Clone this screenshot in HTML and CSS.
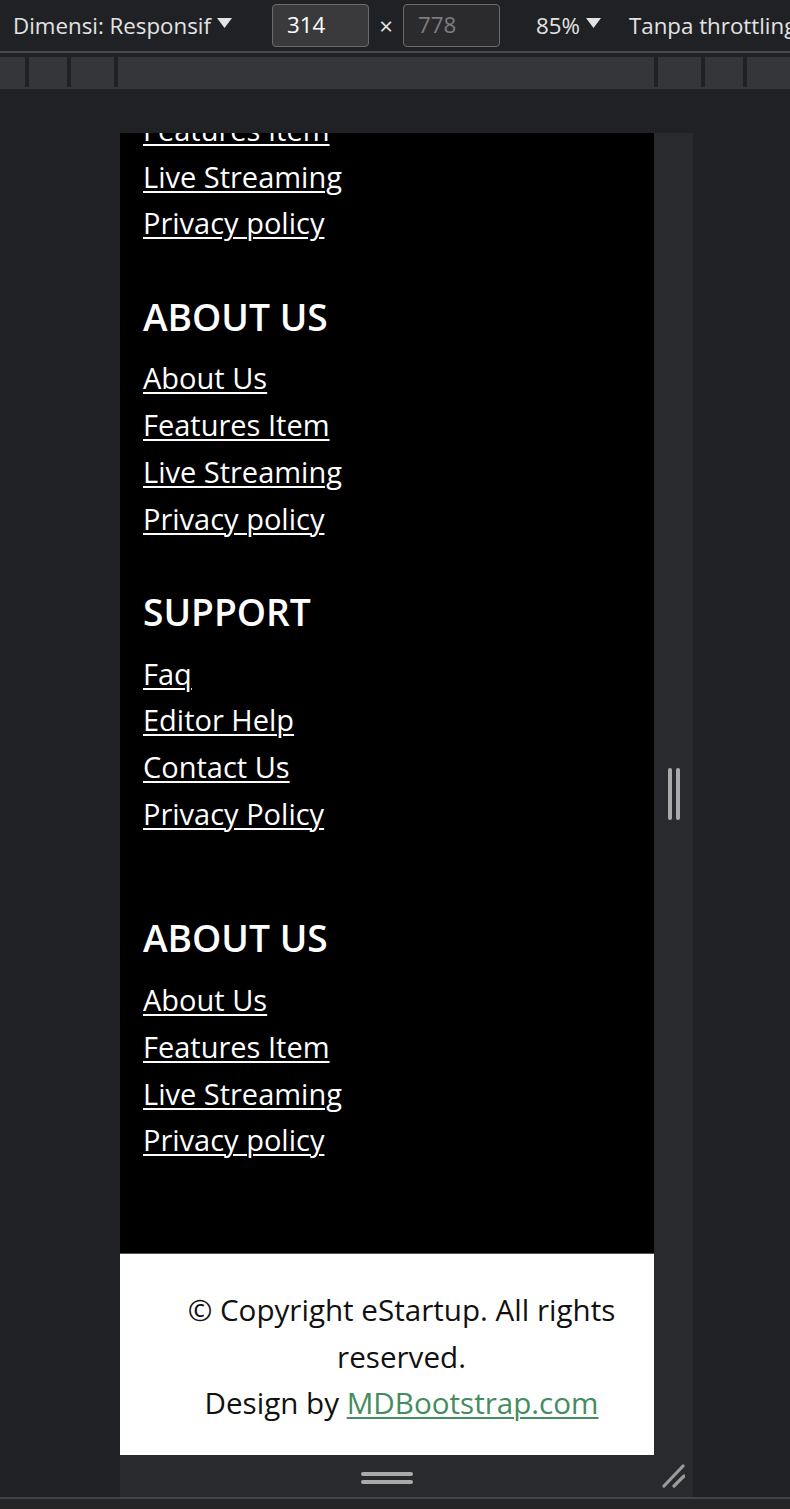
FILE: index.html
```html
<!DOCTYPE html>
<html lang="id">
<head>
<meta charset="utf-8">
<title>Footer responsive preview</title>
<link rel="stylesheet" href="styles.css">
</head>
<body>
<div class="devtools">
  <div class="toolbar">
    <div class="tb-item tb-dim">Dimensi: Responsif<svg class="tri" width="15" height="10" viewBox="0 0 15 10"><polygon points="0,0 15,0 7.5,10"/></svg></div>
    <div class="tb-input">314</div>
    <div class="tb-times">×</div>
    <div class="tb-input tb-muted">778</div>
    <div class="tb-item tb-zoom">85%<svg class="tri" width="15" height="10" viewBox="0 0 15 10"><polygon points="0,0 15,0 7.5,10"/></svg></div>
    <div class="tb-item tb-throttle">Tanpa throttling</div>
  </div>
  <div class="ruler">
    <div class="seg s1"></div><div class="sep"></div>
    <div class="seg s2"></div><div class="sep"></div>
    <div class="seg s3"></div><div class="sep"></div>
    <div class="seg s4"></div><div class="sep"></div>
    <div class="seg s3"></div><div class="sep"></div>
    <div class="seg s2"></div><div class="sep"></div>
    <div class="seg s5"></div>
  </div>
  <div class="stage">
    <div class="device">
      <div class="device-row">
        <div class="screen">
          <div class="dark">
            <ul class="links first">
              <li><a href="#">Features Item</a></li>
              <li><a href="#">Live Streaming</a></li>
              <li><a href="#">Privacy policy</a></li>
            </ul>
            <h5 class="col-title">ABOUT US</h5>
            <ul class="links">
              <li><a href="#">About Us</a></li>
              <li><a href="#">Features Item</a></li>
              <li><a href="#">Live Streaming</a></li>
              <li><a href="#">Privacy policy</a></li>
            </ul>
            <h5 class="col-title">SUPPORT</h5>
            <ul class="links">
              <li><a href="#">Faq</a></li>
              <li><a href="#">Editor Help</a></li>
              <li><a href="#">Contact Us</a></li>
              <li><a href="#">Privacy Policy</a></li>
            </ul>
            <h5 class="col-title last-title">ABOUT US</h5>
            <ul class="links">
              <li><a href="#">About Us</a></li>
              <li><a href="#">Features Item</a></li>
              <li><a href="#">Live Streaming</a></li>
              <li><a href="#">Privacy policy</a></li>
            </ul>
          </div>
          <div class="copyright">
            <p>© Copyright eStartup. All rights<br>reserved.</p>
            <p>Design by <a href="#">MDBootstrap.com</a></p>
          </div>
        </div>
        <div class="side-handle"><span class="vbar"></span><span class="vbar"></span></div>
      </div>
      <div class="bottom-handle">
        <div class="hbars"><span class="hbar"></span><span class="hbar"></span></div>
        <svg class="corner" width="24" height="24" viewBox="0 0 24 24"><line x1="3" y1="22" x2="22" y2="2"/><line x1="13" y1="22" x2="23" y2="12"/></svg>
      </div>
    </div>
  </div>
  <div class="bottom-bar"></div>
</div>
</body>
</html>
```

FILE: styles.css
```css
html, body {
  margin: 0;
  padding: 0;
  background: #202124;
}
body {
  width: 790px;
  height: 1509px;
  overflow: hidden;
  font-family: "Open Sans", "Noto Sans", sans-serif;
}
.devtools {
  width: 790px;
  height: 1509px;
  display: flex;
  flex-direction: column;
  background: #202124;
}

/* toolbar */
.toolbar {
  height: 51px;
  border-bottom: 2px solid #48484b;
  display: flex;
  align-items: center;
  color: #e3e3e3;
  font-size: 22.3px;
  white-space: nowrap;
  overflow: hidden;
  flex: none;
}
.toolbar > * {
  flex: none;
}
.tb-item {
  display: flex;
  align-items: center;
}
.tb-dim {
  margin-left: 13px;
  width: 259px;
}
.tri {
  fill: #e3e3e3;
  margin-left: 6px;
  margin-top: -6px;
}
.tb-input {
  box-sizing: border-box;
  width: 97px;
  height: 43px;
  border: 1.5px solid #6b6b6e;
  border-radius: 4px;
  background: #3a3a3c;
  padding-left: 14px;
  line-height: 40px;
  color: #ffffff;
}
.tb-muted {
  color: #7d7d80;
  background: #2b2b2d;
}
.tb-times {
  width: 34px;
  text-align: center;
  font-size: 24px;
}
.tb-zoom {
  margin-left: 36px;
  width: 93px;
}

/* ruler */
.ruler {
  margin-top: 4px;
  height: 32px;
  background: #35363a;
  display: flex;
  align-items: flex-start;
  flex: none;
}
.seg { height: 30px; }
.sep { width: 4px; height: 30px; background: #202124; }
.s1 { width: 25px; }
.s2 { width: 38px; }
.s3 { width: 43px; }
.s4 { width: 536px; }
.s5 { flex: 1; }

/* stage */
.stage {
  padding-top: 44px;
  padding-left: 120px;
  flex: none;
}
.device {
  width: 573px;
  display: flex;
  flex-direction: column;
}
.device-row {
  display: flex;
}
.screen {
  width: 534px;
  height: 1322px;
  overflow: hidden;
  display: flex;
  flex-direction: column;
}
.side-handle {
  width: 39px;
  background: #292a2d;
  display: flex;
  justify-content: center;
  align-items: center;
  gap: 4px;
}
.vbar {
  width: 4px;
  height: 52px;
  border-radius: 2px;
  background: #a9a9a9;
}
.bottom-handle {
  height: 42px;
  background: #292a2d;
  position: relative;
  display: flex;
  justify-content: flex-start;
  align-items: flex-start;
}
.hbars {
  margin-left: 241px;
  margin-top: 17px;
  display: flex;
  flex-direction: column;
  gap: 4.5px;
}
.hbar {
  width: 52px;
  height: 3.5px;
  border-radius: 2px;
  background: #a9a9a9;
}
.corner {
  position: absolute;
  left: 541px;
  top: 9px;
  stroke: #9b9b9b;
  stroke-width: 3.2;
  stroke-linecap: round;
}
.bottom-bar {
  flex: 1;
  border-top: 2px solid #444446;
  background: #252527;
}

/* page content */
.dark {
  background: #000;
  height: 1121px;
  box-sizing: border-box;
  padding: 0 23px;
  flex: none;
  border-bottom: 1px solid #555;
}
.links {
  list-style: none;
  margin: 0;
  padding: 0;
}
.links li {
  line-height: 46.7px;
  font-size: 29px;
}
.links a {
  color: #fff;
  text-decoration: underline;
  text-decoration-thickness: 2px;
  text-underline-offset: 3px;
}
.links.first {
  margin-top: -26px;
}
.col-title {
  margin: 46.5px 0 15px;
  font-size: 37.2px;
  font-weight: 600;
  line-height: 46.8px;
  color: #fff;
}
.col-title.last-title {
  margin-top: 78px;
}
.copyright {
  background: #fff;
  flex: 1;
  box-sizing: border-box;
  padding: 33px 0 0 29px;
  text-align: center;
  font-size: 29.6px;
  line-height: 46.7px;
  color: #111;
}
.copyright p {
  margin: 0;
}
.copyright a {
  color: #458c60;
  text-decoration: underline;
  text-decoration-thickness: 2px;
  text-underline-offset: 3px;
}
```
